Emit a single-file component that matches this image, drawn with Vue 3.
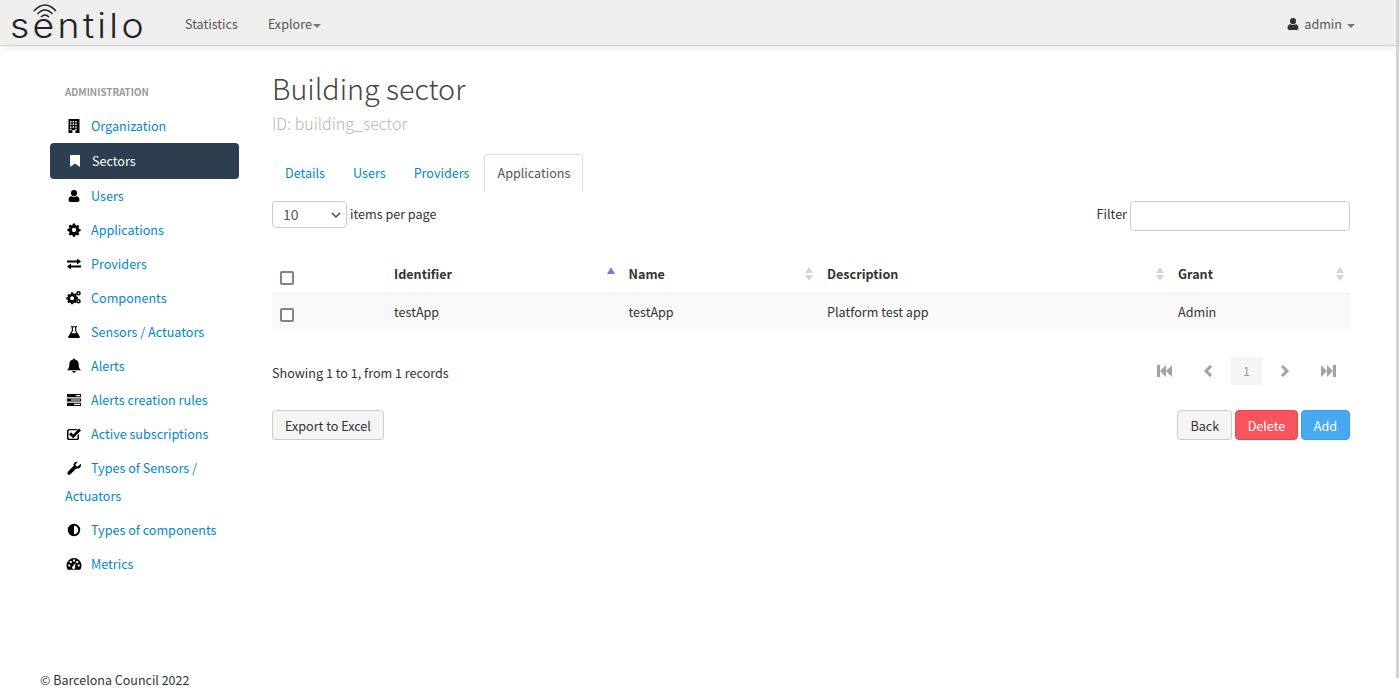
<script setup>
const navItems = [
  { label: "Organization", icon: "building" },
  { label: "Sectors", icon: "bookmark", active: true },
  { label: "Users", icon: "user" },
  { label: "Applications", icon: "cog" },
  { label: "Providers", icon: "exchange" },
  { label: "Components", icon: "cogs" },
  { label: "Sensors / Actuators", icon: "flask" },
  { label: "Alerts", icon: "bell" },
  { label: "Alerts creation rules", icon: "tasks" },
  { label: "Active subscriptions", icon: "check" },
  { label: "Types of Sensors / Actuators", icon: "wrench" },
  { label: "Types of components", icon: "adjust" },
  { label: "Metrics", icon: "dashboard" },
];
const tabs = ["Details", "Users", "Providers", "Applications"];
</script>

<template>
  <div class="page">
    <!-- NAVBAR -->
    <header class="navbar">
      <div class="logo">
        <svg class="wifi" width="24" height="16" viewBox="0 0 24 16" fill="none" stroke="#222" stroke-width="1.6">
          <path d="M1 7Q12 -5 23 7" />
          <path d="M4.500 10Q12 2 19.500 10" />
          <path d="M8 13Q12 9 16 13" />
        </svg>
        <span class="wordmark">sentilo</span>
      </div>
      <a class="nav-link">Statistics</a>
      <a class="nav-link">Explore<i class="caret"></i></a>
      <a class="nav-link user">
        <svg class="user-icon" width="16" height="16" viewBox="0 0 16 16"><use href="#i-user" /></svg>
        admin<i class="caret spaced"></i>
      </a>
    </header>

    <div class="content">
      <!-- SIDEBAR -->
      <aside class="sidebar">
        <div class="side-title">ADMINISTRATION</div>
        <ul>
          <li v-for="item in navItems" :key="item.label" :class="{ active: item.active }">
            <span class="side-icon">
              <svg width="16" height="16" viewBox="0 0 16 16"><use :href="'#i-' + item.icon" /></svg>
            </span>
            <a>{{ item.label }}</a>
          </li>
        </ul>
      </aside>

      <!-- MAIN -->
      <main class="main">
        <h1>Building sector</h1>
        <div class="subtitle">ID: building_sector</div>

        <div class="tabs">
          <a v-for="t in tabs" :key="t" :class="{ current: t === 'Applications' }">{{ t }}</a>
        </div>

        <div class="table-top">
          <div class="per-page">
            <div class="select">10
              <svg width="10" height="6" viewBox="0 0 10 6" fill="none" stroke="#444" stroke-width="1.400"><path d="M1 1l4 4 4-4" /></svg>
            </div>
            <span>items per page</span>
          </div>
          <div class="filter">
            <span>Filter</span>
            <div class="input"></div>
          </div>
        </div>

        <div class="grid head">
          <div class="cell"><i class="check"></i></div>
          <div class="cell th">Identifier<span class="sort up"></span></div>
          <div class="cell th">Name<span class="sort"></span></div>
          <div class="cell th">Description<span class="sort"></span></div>
          <div class="cell th">Grant<span class="sort"></span></div>
        </div>
        <div class="grid row">
          <div class="cell"><i class="check"></i></div>
          <div class="cell">testApp</div>
          <div class="cell">testApp</div>
          <div class="cell">Platform test app</div>
          <div class="cell">Admin</div>
        </div>

        <div class="table-bottom">
          <span class="showing">Showing 1 to 1, from 1 records</span>
          <div class="pager">
            <svg width="16" height="12" viewBox="0 0 16 12" fill="#a3a3a3"><path d="M0 0h3v12H0zM3 6l6-6v12zM9 6l6-6v12z" /></svg>
            <svg class="prev" width="10" height="12" viewBox="0 0 10 12" fill="none" stroke="#a3a3a3" stroke-width="3"><path d="M8 1L3 6l5 5" /></svg>
            <span class="page-num">1</span>
            <svg class="next" width="10" height="12" viewBox="0 0 10 12" fill="none" stroke="#a3a3a3" stroke-width="3"><path d="M2 1l5 5-5 5" /></svg>
            <svg class="last" width="16" height="12" viewBox="0 0 16 12" fill="#a3a3a3"><path d="M16 0h-3v12h3zM13 6L7 0v12zM7 6L1 0v12z" /></svg>
          </div>
        </div>

        <div class="actions">
          <button class="btn">Export to Excel</button>
          <div class="actions-right">
            <button class="btn">Back</button>
            <button class="btn danger">Delete</button>
            <button class="btn primary">Add</button>
          </div>
        </div>
      </main>
    </div>

    <footer class="footer">© Barcelona Council 2022</footer>

    <!-- scrollbar thumb -->
    <div class="thumb"></div>

    <!-- ICON DEFS -->
    <svg width="0" height="0" class="defs">
      <defs>
        <symbol id="i-building" viewBox="0 0 16 16"><path fill-rule="evenodd" d="M2.500 1h11v14h-11zM4 3v1.500h1.500V3zm2.600 0v1.500h1.500V3zm2.600 0v1.500h1.500V3zM4 5.600v1.500h1.500V5.600zm2.600 0v1.500h1.500V5.600zm2.600 0v1.500h1.500V5.600zM4 8.200v1.500h1.500V8.200zm2.600 0v1.500h1.500V8.200zm2.600 0v1.500h1.500V8.200zM4 10.800v1.500h1.500v-1.500zm5.200 0v1.500h1.500v-1.500zM6.400 12v3h3v-3z" /></symbol>
        <symbol id="i-bookmark" viewBox="0 0 16 16"><path d="M3 2h10v12l-5-3.600L3 14z" /></symbol>
        <symbol id="i-user" viewBox="-2.500 -2 16 16"><path d="M5.500 0a3 3 0 0 1 3 3.200 3 3 0 0 1-6 0 3 3 0 0 1 3-3.200zM3 6.200c1.400 1 3.600 1 5 0 1.700.2 3 1.300 3 3.800 0 1.300-.8 2-2 2H2c-1.200 0-2-.7-2-2 0-2.500 1.300-3.600 3-3.800z" /></symbol>
        <symbol id="i-cog" viewBox="-1 -1 18 18"><path fill-rule="evenodd" d="M6.800 2h2.400l.4 1.800 1.200.5 1.600-1 1.700 1.700-1 1.600.5 1.200 1.800.4v2.400l-1.800.4-.5 1.200 1 1.600-1.700 1.700-1.600-1-1.200.5-.4 1.800H6.800l-.4-1.800-1.200-.5-1.600 1-1.700-1.700 1-1.600-.5-1.200L.6 10.400V8l1.800-.4.500-1.200-1-1.600 1.700-1.700 1.600 1 1.200-.5zM8 6.800a2.400 2.400 0 1 0 0 4.800 2.400 2.400 0 0 0 0-4.800z" transform="translate(0 -1.200)" /></symbol>
        <symbol id="i-exchange" viewBox="0 0 16 16"><path d="M1 5h10V3l4 3-4 3V7H1zM15 10H5V8l-4 3 4 3v-2h10z" transform="translate(0 -.5)" /></symbol>
        <symbol id="i-cogs" viewBox="0 0 16 16"><path fill-rule="evenodd" d="M4.500 4h2l.3 1.300 1 .4L9 5l1.300 1.300-.7 1.100.4 1 1.300.3v1.800L9.900 11.500l-.4 1 .7 1.100L9 15l-1.200-.7-1 .4-.3 1.300h-2l-.3-1.300-1-.4L2 15 .7 13.600l.7-1.100-.4-1L-.3 11.200V9.400L1 9.100l.4-1-.7-1.100L2 5.700l1.200.7 1-.4zM5.500 8a2 2 0 1 0 0 4 2 2 0 0 0 0-4z" transform="translate(.6 -1.800)" /><path fill-rule="evenodd" d="M12.500 1a2.300 2.300 0 1 1 0 4.600 2.300 2.300 0 0 1 0-4.600zm0 1.500a.8.8 0 1 0 0 1.600.8.8 0 0 0 0-1.600zM12.500 9a2.300 2.300 0 1 1 0 4.600 2.300 2.300 0 0 1 0-4.600zm0 1.500a.8.8 0 1 0 0 1.600.8.8 0 0 0 0-1.600z" /></symbol>
        <symbol id="i-flask" viewBox="-1 -1 18 18"><path fill-rule="evenodd" d="M4.500 1.500h7v1.200h-1v3.800l4 6.700c.4.800 0 1.500-1 1.500H2.500c-1 0-1.400-.7-1-1.500l4-6.700V2.700h-1zM6.800 2.700v4.100L5.200 9.500h5.600L9.200 6.800V2.700z" /></symbol>
        <symbol id="i-bell" viewBox="0 0 16 16"><path d="M8 .5a1 1 0 0 1 1 1c2.700.4 3.700 2.700 3.700 5.300 0 3.200 1 4.300 2.300 5.400H1c1.300-1.100 2.300-2.200 2.300-5.400C3.300 4.200 4.300 1.900 7 1.500a1 1 0 0 1 1-1zM6.200 13h3.600a1.800 1.800 0 0 1-3.600 0z" /></symbol>
        <symbol id="i-tasks" viewBox="0 0 16 16"><path fill-rule="evenodd" d="M1 2h14v3.200H1zm9 1v1.200h4V3zM1 6.400h14v3.200H1zm4 1v1.200h9V7.400zM1 10.800h14V14H1zm7 1V13h6v-1.200z" /></symbol>
        <symbol id="i-check" viewBox="0 0 16 16"><path fill-rule="evenodd" d="M3 3h9l-1.300 1.300H3.300a.8.8 0 0 0-.8.800v6.900c0 .4.400.8.800.8h7.400c.4 0 .8-.4.800-.8V9.500L13 8v4.200c0 1-.8 1.800-1.800 1.800H3C2 14 1 13.200 1 12.200V5C1 4 2 3 3 3z" /><path d="M5 6.300l2.200 2.200L13 2.500l2 2-7.800 7.800L3 8.300z" /></symbol>
        <symbol id="i-wrench" viewBox="0 0 16 16"><path d="M14.800 3.800c.6 1.800-.1 3.600-1.700 4.400-1 .5-2 .4-2.800.2L4.500 14.200a1.700 1.700 0 0 1-2.600-2.500l5.800-5.900c-.3-1.100-.1-2.300.7-3.100.9-.9 2.300-1.300 3.500-.9L9.500 4.200l.4 1.900 1.900.4z" /></symbol>
        <symbol id="i-adjust" viewBox="-1 -1 18 18"><path fill-rule="evenodd" d="M8 1a7 7 0 1 1 0 14A7 7 0 0 1 8 1zm0 2.200v9.600a4.800 4.800 0 0 0 0-9.600z" /></symbol>
        <symbol id="i-dashboard" viewBox="0 0 16 16"><path fill-rule="evenodd" d="M8 2a7.500 7.500 0 0 1 7.500 7.500c0 1.600-.5 3-1.300 4.200H1.800C1 12.500.5 11.100.5 9.500A7.500 7.500 0 0 1 8 2zM7 3.500v2h2v-2zM3.800 5v2h2V5zm6.400 0v2h2V5zM2.300 8.500v2h2v-2zm9.400 0v2h2v-2zM9.800 6.500L7 10a1.600 1.600 0 1 0 2 .5z" /></symbol>
      </defs>
    </svg>
  </div>
</template>

<style>
html, body {
  margin: 0;
  background: #fff;
}
</style>

<style scoped>
.page {
  position: relative;
  width: 1400px;
  height: 700px;
  overflow: hidden;
  font-family: "Noto Sans CJK SC", "Source Sans Pro", "Noto Sans", sans-serif;
  font-size: 12.600px;
  color: #333;
}
a {
  color: #0088cc;
  text-decoration: none;
}

/* NAVBAR */
.navbar {
  display: flex;
  align-items: center;
  height: 45px;
  background: #eeeeee;
  border-bottom: 1px solid #d4d4d4;
  box-shadow: 0 1px 10px rgba(0, 0, 0, 0.1);
  padding-left: 10px;
  padding-right: 45px;
}
.logo {
  position: relative;
  width: 175px;
  height: 45px;
}
.wifi {
  position: absolute;
  left: 23px;
  top: 4px;
}
.wordmark {
  position: absolute;
  left: 0;
  top: 9px;
  font-family: Inter, sans-serif;
  font-weight: 300;
  font-size: 34px;
  line-height: 34px;
  letter-spacing: 3px;
  color: #222;
  transform: scaleX(1.1);
  transform-origin: left center;
}
.nav-link {
  color: #555;
  margin-right: 30px;
  margin-top: 2px;
}
.caret {
  display: inline-block;
  vertical-align: middle;
  margin-left: 1px;
  border-top: 4px solid #777;
  border-left: 4px solid transparent;
  border-right: 4px solid transparent;
}
.caret.spaced {
  margin-left: 5px;
}
.user {
  margin-left: auto;
  margin-right: 0;
}
.user-icon {
  vertical-align: -3px;
  fill: #333;
}

.content {
  display: flex;
  padding-left: 50px;
}

/* SIDEBAR */
.sidebar {
  width: 189px;
  padding-top: 39px;
}
.side-title {
  padding-left: 15px;
  font-size: 9.800px;
  font-weight: 700;
  color: #999;
  line-height: 14px;
  margin-bottom: 10px;
}
.sidebar ul {
  list-style: none;
  margin: 0;
  padding: 0;
}
.sidebar li {
  padding: 3px 15px;
  line-height: 28px;
}
.sidebar li.active {
  background: #2c3e50;
  border-radius: 4px;
  padding: 4px 15px 4px 16px;
}
.sidebar li.active a {
  color: #fff;
}
.side-icon {
  display: inline-block;
  width: 26px;
  height: 16px;
  vertical-align: -3px;
}
.side-icon svg {
  display: block;
  fill: #000;
  margin-left: 1px;
}
.active .side-icon svg {
  fill: #fff;
}

/* MAIN */
.main {
  margin-left: 33px;
  width: 1078px;
}
h1 {
  margin: 22px 0 0;
  font-size: 28.700px;
  line-height: 40px;
  font-weight: 300;
  color: #444;
}
.subtitle {
  font-size: 16px;
  line-height: 24px;
  margin-top: 3px;
  font-weight: 300;
  color: #b5b5b5;
}
.tabs {
  display: flex;
  margin-top: 19px;
  height: 38px;
}
.tabs a {
  padding: 0 13px;
  margin-right: 2px;
  line-height: 38px;
}
.tabs a.current {
  color: #555;
  border: 1px solid #ddd;
  border-bottom: none;
  border-radius: 4px 4px 0 0;
  line-height: 36px;
  padding: 0 12px;
  background: #fff;
}
.table-top {
  display: flex;
  justify-content: space-between;
  margin-top: 9px;
  height: 30px;
}
.per-page {
  display: flex;
  align-items: flex-start;
  gap: 3px;
}
.per-page span {
  line-height: 26px;
}
.select {
  box-sizing: border-box;
  width: 75px;
  height: 27px;
  border: 1px solid #ccc;
  border-radius: 4px;
  padding-left: 10px;
  line-height: 25px;
  position: relative;
  color: #555;
  font-size: 14px;
}
.select svg {
  position: absolute;
  right: 5px;
  top: 10px;
}
.filter {
  display: flex;
  align-items: center;
  gap: 3px;
}
.filter span {
  padding-bottom: 6px;
}
.input {
  box-sizing: border-box;
  width: 220px;
  height: 30px;
  border: 1px solid #ccc;
  border-radius: 4px;
}
.grid {
  display: grid;
  grid-template-columns: 122px 234.500px 198.500px 351px 172px;
}
.cell {
  position: relative;
}
.cell:first-child {
  padding-left: 8px;
}
.head {
  margin-top: 25px;
  height: 38px;
  line-height: 36px;
  border-bottom: 1px solid #eee;
  box-sizing: border-box;
}
.th {
  font-weight: 700;
}
.row {
  height: 36px;
  line-height: 36px;
  background: #f9f9f9;
}
.check {
  display: inline-block;
  box-sizing: border-box;
  width: 14px;
  height: 14px;
  border: 2px solid #83818f;
  border-radius: 2px;
  background: #fff;
  vertical-align: middle;
  margin-top: 4px;
}
.row .check {
  margin-top: 2px;
}
.sort {
  position: absolute;
  right: 18px;
  top: 11px;
  width: 0;
  height: 14px;
}
.cell:last-child .sort {
  right: 10px;
}
.sort::before,
.sort::after {
  content: "";
  position: absolute;
  left: -4px;
  border-left: 4px solid transparent;
  border-right: 4px solid transparent;
}
.sort::before {
  top: 0;
  border-bottom: 6px solid #d5d5d5;
}
.sort::after {
  top: 8px;
  border-top: 6px solid #d5d5d5;
}
.sort.up {
  top: 11px;
  right: 17.500px;
}
.sort.up::before {
  border-bottom: 7px solid #7b7bd6;
}
.sort.up::after {
  display: none;
}
.table-bottom {
  display: flex;
  justify-content: space-between;
  align-items: center;
  margin-top: 26px;
  height: 30px;
}
.showing {
  padding-top: 2px;
}
.pager {
  display: flex;
  align-items: center;
  margin-right: 14px;
}
.prev {
  margin-left: 30px;
  margin-right: 18px;
}
.page-num {
  width: 31px;
  height: 28px;
  background: #f5f5f5;
  color: #999;
  text-align: center;
  line-height: 28px;
}
.next {
  margin-left: 18px;
}
.last {
  margin-left: 30px;
}
.actions {
  display: flex;
  justify-content: space-between;
  margin-top: 24px;
}
.actions-right {
  display: flex;
  gap: 3px;
}
.btn {
  font: inherit;
  height: 30px;
  padding: 0 12px;
  border: 1px solid #ccc;
  border-radius: 4px;
  background: #f5f5f5;
  color: #333;
}
.danger {
  padding: 0 11.500px;
  background: #f9535d;
  border-color: #e8474f;
  color: #fff;
}
.primary {
  background: #47a9f0;
  border-color: #3d9de2;
  color: #fff;
}
.footer {
  position: absolute;
  left: 40px;
  top: 671px;
  line-height: 18px;
  font-size: 12.500px;
  color: #333;
}
.thumb {
  position: absolute;
  left: 1396px;
  top: 0;
  width: 3px;
  height: 678px;
  background: #d2d2d2;
}
.defs {
  position: absolute;
}
</style>
